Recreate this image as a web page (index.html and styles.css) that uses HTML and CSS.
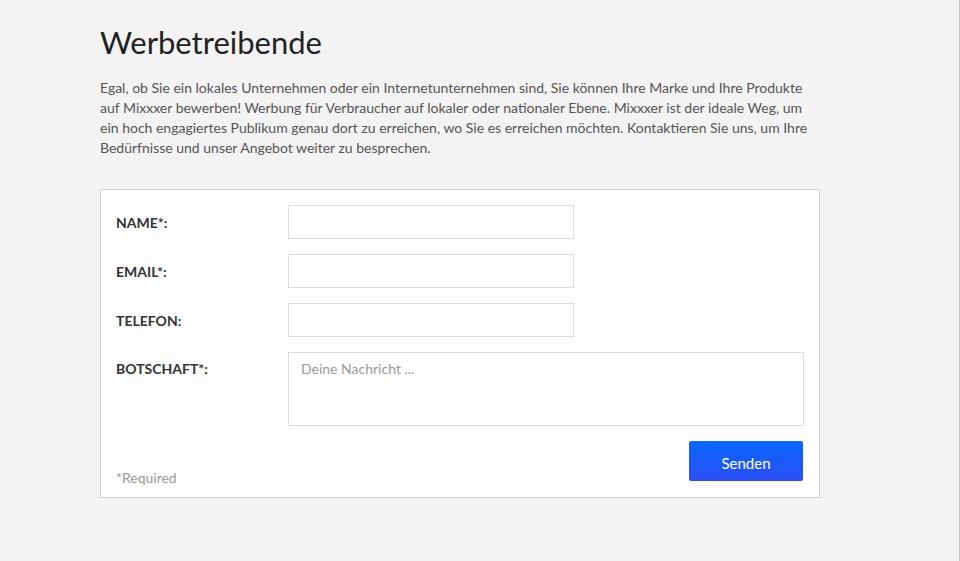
FILE: index.html
```html
<!DOCTYPE html>
<html lang="de">
<head>
<meta charset="utf-8">
<title>Werbetreibende</title>
<link rel="stylesheet" href="styles.css">
</head>
<body>
<main class="page">
  <h1 class="title">Werbetreibende</h1>
  <p class="intro">Egal, ob Sie ein lokales Unternehmen oder ein Internetunternehmen sind, Sie können Ihre Marke und Ihre Produkte auf Mixxxer bewerben! Werbung für Verbraucher auf lokaler oder nationaler Ebene. Mixxxer ist der ideale Weg, um ein hoch engagiertes Publikum genau dort zu erreichen, wo Sie es erreichen möchten. Kontaktieren Sie uns, um Ihre Bedürfnisse und unser Angebot weiter zu besprechen.</p>
  <form class="card">
    <div class="row">
      <label class="label" for="name">NAME*:</label>
      <input class="field" id="name" type="text">
    </div>
    <div class="row">
      <label class="label" for="email">EMAIL*:</label>
      <input class="field" id="email" type="text">
    </div>
    <div class="row">
      <label class="label" for="tel">TELEFON:</label>
      <input class="field" id="tel" type="text">
    </div>
    <div class="row row-top">
      <label class="label label-top" for="msg">BOTSCHAFT*:</label>
      <textarea class="area" id="msg" placeholder="Deine Nachricht ..."></textarea>
    </div>
    <div class="footer">
      <span class="required">*Required</span>
      <button class="send" type="button">Senden</button>
    </div>
  </form>
</main>
</body>
</html>
```
FILE: styles.css
```css
html {
  background: #f3f3f3;
  height: 100%;
}
body {
  margin: 0;
  min-height: 100%;
  border-right: 1px solid #c9c9c9;
  box-sizing: border-box;
  font-family: Lato, "Open Sans", sans-serif;
}
.page {
  width: 720px;
  margin-left: 100px;
  padding-top: 22px;
}
.title {
  margin: 0;
  font-size: 31px;
  font-weight: 400;
  line-height: 40px;
  color: #222;
}
.intro {
  margin: 16px 0 0;
  font-size: 14px;
  line-height: 20px;
  color: #555;
}
.card {
  margin-top: 31px;
  background: #fdfdfd;
  border: 1px solid #cfcfcf;
  padding: 15px 15px 16px;
  display: flex;
  flex-direction: column;
  gap: 15px;
}
.row {
  display: flex;
  align-items: center;
}
.row-top {
  align-items: flex-start;
}
.label {
  width: 172px;
  flex: none;
  font-size: 14px;
  font-weight: 700;
  color: #333;
}
.label-top {
  padding-top: 8px;
}
.field {
  width: 286px;
  height: 34px;
  box-sizing: border-box;
  border: 1px solid #dcdcdc;
  background: #fff;
  margin: 0;
  font-family: inherit;
}
.area {
  flex: 1;
  height: 74px;
  box-sizing: border-box;
  border: 1px solid #dcdcdc;
  background: #fff;
  margin: 0;
  padding: 7px 12px;
  resize: none;
  font-family: Lato, sans-serif;
  font-size: 14px;
  line-height: 18px;
  color: #333;
}
.area::placeholder {
  color: #9a9a9a;
}
.footer {
  display: flex;
  justify-content: space-between;
  align-items: flex-end;
}
.required {
  font-size: 14px;
  color: #9a9a9a;
  line-height: 16px;
  margin-bottom: -5px;
}
.send {
  width: 114px;
  height: 40px;
  margin-right: 1px;
  padding: 3px 0 0;
  border: 0;
  border-radius: 2px;
  background: linear-gradient(#0a66ff, #2b4ff2);
  color: #fff;
  font-family: Lato, sans-serif;
  font-size: 15px;
}
```
